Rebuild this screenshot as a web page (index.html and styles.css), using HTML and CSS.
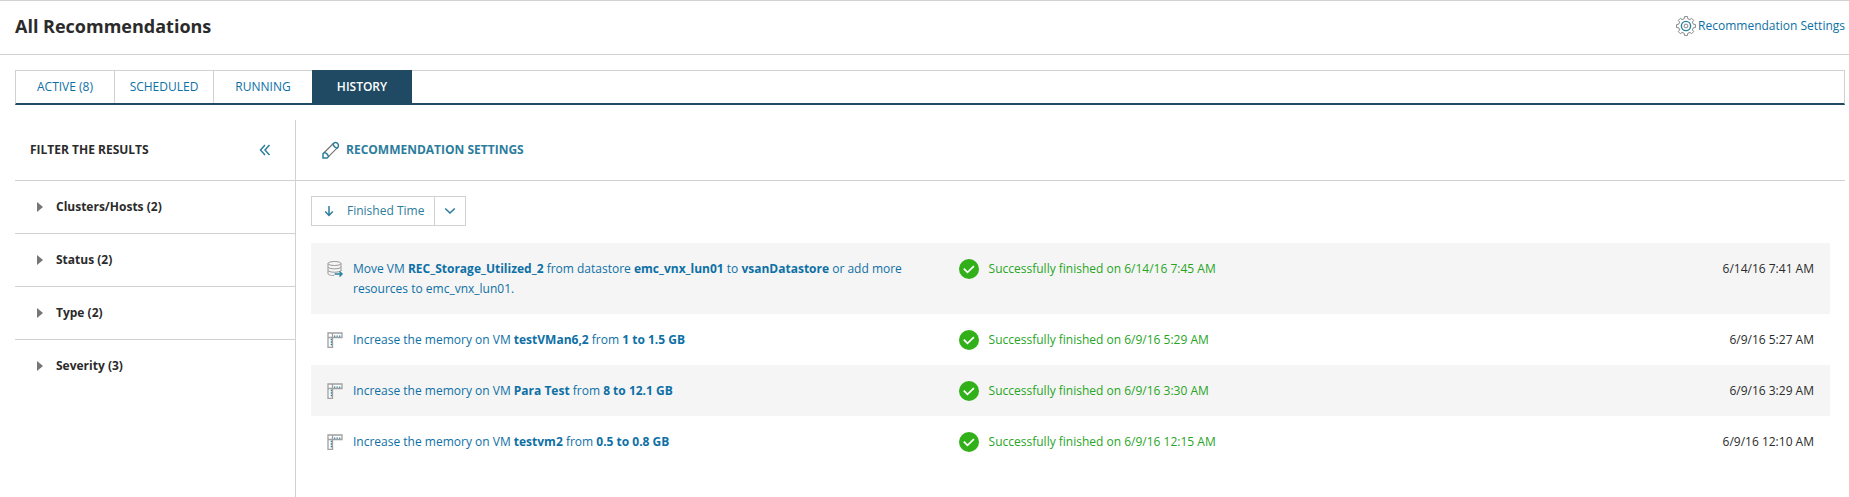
FILE: index.html
```html
<!DOCTYPE html>
<html lang="en">
<head>
<meta charset="utf-8">
<title>All Recommendations</title>
<link rel="stylesheet" href="styles.css">
</head>
<body>
<svg class="sprite" aria-hidden="true">
  <symbol id="check" viewBox="0 0 20 20">
    <circle cx="10" cy="10" r="10" fill="#32b01a"/>
    <path d="M4.800 9.600l3.700 3.800 6.400-6.200" fill="none" stroke="#fff" stroke-width="1.700"/>
  </symbol>
  <symbol id="ruler" viewBox="0 0 16 16">
    <path d="M1 1h14v4.500H5.500V15.500H1zM5.500 1v4.500H1" fill="#fff" stroke="#a0a0a0" stroke-width="1.300"/>
    <path d="M7 4.200h1.300M9.500 4.200h1.300M12 4.200h1.300M3.700 7.500H5M3.700 10H5M3.700 12.500H5" stroke="#2c7d9c" stroke-width="1.300"/>
  </symbol>
  <symbol id="datastore" viewBox="0 0 16 16">
    <g fill="none" stroke="#999" stroke-width="1">
      <ellipse cx="7.500" cy="2.500" rx="6.500" ry="2"/>
      <path d="M1 2.500v10c0 1.300 2.500 2 6 2M14 2.500v7.500M1 5.800c0 2.700 13 2.700 13 0M1 9.200c0 2.700 13 2.700 13 0"/>
    </g>
    <path d="M7.500 13h7.500M12.500 10.500l2.500 2.500-2.500 2.500" fill="none" stroke="#2980a0" stroke-width="1.500"/>
  </symbol>
  <symbol id="triangle" viewBox="0 0 6 10"><path d="M0 0l6 5-6 5z" fill="#767676"/></symbol>
</svg>
<header class="page-header">
  <h1 class="page-title">All Recommendations</h1>
  <a class="settings-link" href="#">
    <svg class="gear" viewBox="-10 -10 20 20" aria-hidden="true">
      <path d="M1.500-9.400L1.800-7.300 3.900-6.400 5.600-7.700 7.700-5.600 6.400-3.900 7.300-1.800 9.400-1.500 9.400 1.500 7.300 1.800 6.400 3.900 7.700 5.600 5.600 7.700 3.900 6.400 1.800 7.300 1.500 9.400-1.500 9.400-1.800 7.300-3.900 6.400-5.600 7.700-7.700 5.600-6.400 3.900-7.300 1.800-9.400 1.500-9.400-1.500-7.300-1.800-6.400-3.900-7.700-5.600-5.600-7.700-3.900-6.400-1.800-7.300-1.500-9.400z" fill="none" stroke="#858585" stroke-width="1" stroke-linejoin="round"/>
      <circle r="4.600" fill="none" stroke="#2980a0" stroke-width="1.400"/>
      <circle r="1.900" fill="none" stroke="#858585"/>
    </svg>Recommendation Settings</a>
</header>
<nav class="tabs">
  <a class="tab" href="#">ACTIVE (8)</a>
  <a class="tab" href="#">SCHEDULED</a>
  <a class="tab" href="#">RUNNING</a>
  <a class="tab tab-selected" href="#" aria-current="page">HISTORY</a>
</nav>
<div class="content">
  <aside class="filters">
    <div class="panel-head filters-head">
      <h2 class="filters-title">FILTER THE RESULTS</h2>
      <button class="collapse" aria-label="Collapse filters">
        <svg class="collapse-icon" viewBox="0 0 12 12" aria-hidden="true"><path d="M6 1L1.500 6 6 11M10.500 1L6 6l4.500 5" fill="none" stroke="#2c7d9c" stroke-width="1.500"/></svg>
      </button>
    </div>
    <button class="filter"><svg class="triangle"><use href="#triangle"/></svg>Clusters/Hosts (2)</button>
    <button class="filter"><svg class="triangle"><use href="#triangle"/></svg>Status (2)</button>
    <button class="filter"><svg class="triangle"><use href="#triangle"/></svg>Type (2)</button>
    <button class="filter"><svg class="triangle"><use href="#triangle"/></svg>Severity (3)</button>
  </aside>
  <main class="results">
    <div class="panel-head toolbar">
      <button class="toolbar-button">
        <svg class="pencil" viewBox="0 0 18 18" aria-hidden="true">
          <path d="M2.300 11.500l9-9M6.500 15.700L15.500 6.700" fill="none" stroke="#777" stroke-width="1.200"/>
          <path d="M11.200 2.700c2.500-3.600 7.400 1 4.200 4.200-1.800.4-4.400-2-4.200-4.200zM1 17v-4.200l1.300-1.300c1.500 0 4 2.200 4.200 4.200L5 17z" fill="none" stroke="#2c7d9c" stroke-width="1.500"/>
        </svg>RECOMMENDATION SETTINGS</button>
    </div>
    <div class="sorter">
      <button class="sort-field">
        <svg class="sort-arrow" viewBox="0 0 10 12" aria-hidden="true"><path d="M5 1v9.500M1.200 6.500L5 10.400l3.800-3.900" fill="none" stroke="#2c7d9c" stroke-width="1.500"/></svg>Finished Time</button>
      <button class="sort-menu" aria-label="Choose sort field">
        <svg class="chevron" viewBox="0 0 12 8" aria-hidden="true"><path d="M1.200 1.500L6 6l4.800-4.500" fill="none" stroke="#2c7d9c" stroke-width="1.600"/></svg>
      </button>
    </div>
    <table class="history">
      <tbody>
        <tr>
          <td class="kind"><svg class="kind-icon"><use href="#datastore"/></svg></td>
          <td class="action"><a href="#">Move VM <b>REC_Storage_Utilized_2</b> from datastore <b>emc_vnx_lun01</b> to <b>vsanDatastore</b> or add more resources to emc_vnx_lun01.</a></td>
          <td class="status"><div class="status-line"><svg class="status-icon"><use href="#check"/></svg>Successfully finished on 6/14/16 7:45 AM</div></td>
          <td class="time">6/14/16 7:41 AM</td>
        </tr>
        <tr>
          <td class="kind"><svg class="kind-icon"><use href="#ruler"/></svg></td>
          <td class="action"><a href="#">Increase the memory on VM <b>testVMan6,2</b> from <b>1 to 1.5 GB</b></a></td>
          <td class="status"><div class="status-line"><svg class="status-icon"><use href="#check"/></svg>Successfully finished on 6/9/16 5:29 AM</div></td>
          <td class="time">6/9/16 5:27 AM</td>
        </tr>
        <tr>
          <td class="kind"><svg class="kind-icon"><use href="#ruler"/></svg></td>
          <td class="action"><a href="#">Increase the memory on VM <b>Para Test</b> from <b>8 to 12.1 GB</b></a></td>
          <td class="status"><div class="status-line"><svg class="status-icon"><use href="#check"/></svg>Successfully finished on 6/9/16 3:30 AM</div></td>
          <td class="time">6/9/16 3:29 AM</td>
        </tr>
        <tr>
          <td class="kind"><svg class="kind-icon"><use href="#ruler"/></svg></td>
          <td class="action"><a href="#">Increase the memory on VM <b>testvm2</b> from <b>0.5 to 0.8 GB</b></a></td>
          <td class="status"><div class="status-line"><svg class="status-icon"><use href="#check"/></svg>Successfully finished on 6/9/16 12:15 AM</div></td>
          <td class="time">6/9/16 12:10 AM</td>
        </tr>
      </tbody>
    </table>
  </main>
</div>
</body>
</html>
```
FILE: styles.css
```css
* { box-sizing: border-box; }

body {
  margin: 0;
  min-height: 100vh;
  display: flex;
  flex-direction: column;
  background: #fff;
  color: #2b2b2b;
  font: 12px/20px "Open Sans", sans-serif;
}

a { color: #0d70a5; text-decoration: none; }
b { font-weight: 700; }
svg { display: block; flex: none; }
.sprite { position: absolute; width: 0; height: 0; }

button {
  margin: 0;
  padding: 0;
  border: 0;
  background: none;
  color: inherit;
  font: inherit;
  text-align: left;
  cursor: pointer;
}

.page-header {
  display: flex;
  align-items: center;
  justify-content: space-between;
  height: 55px;
  padding: 0 4px 4px 15px;
  border-top: 1px solid #d2d2d2;
  border-bottom: 1px solid #d2d2d2;
}
.page-title { margin: 0; font-size: 18px; line-height: 24px; font-weight: 700; }
.settings-link { display: flex; align-items: center; gap: 2px; }
.gear { width: 20px; height: 20px; }

.tabs {
  display: flex;
  height: 35px;
  margin: 15px 4px 15px 15px;
  border: 1px solid #d2d2d2;
  border-bottom: 2px solid #204a63;
}
.tab {
  width: 99px;
  padding: 6px 0;
  border-right: 1px solid #d2d2d2;
  text-align: center;
}
.tab-selected {
  width: 100px;
  margin: -1px 0 0 -1px;
  padding-top: 7px;
  border: 0;
  background: #204a63;
  color: #fff;
  font-weight: 600;
}

.content { display: flex; flex: 1; margin: 0 4px 0 15px; }
.filters { width: 281px; flex: none; border-right: 1px solid #d2d2d2; }
.panel-head {
  display: flex;
  align-items: center;
  height: 61px;
  border-bottom: 1px solid #d2d2d2;
}
.filters-head { justify-content: space-between; padding: 0 24px 0 15px; }
.filters-title { margin: 0; font-size: 12px; font-weight: 700; }
.collapse-icon { width: 12px; height: 12px; }
.filter {
  display: flex;
  align-items: center;
  gap: 13px;
  width: 100%;
  height: 53px;
  padding: 0 22px;
  border-bottom: 1px solid #d2d2d2;
  font-weight: 700;
}
.filter:last-child { border-bottom-color: transparent; }
.triangle { width: 6px; height: 10px; }

.results { flex: 1; min-width: 0; }
.toolbar { padding: 0 26px; }
.toolbar-button { display: flex; align-items: center; gap: 6px; color: #2c7d9c; font-weight: 700; }
.pencil { width: 18px; height: 18px; }

.sorter {
  display: inline-flex;
  height: 30px;
  margin: 15px 15px 17px;
  border: 1px solid #d2d2d2;
  vertical-align: top;
  color: #2c7d9c;
}
.sort-field { display: flex; align-items: center; gap: 13px; padding: 0 10px 0 12px; }
.sort-arrow { width: 10px; height: 12px; }
.sort-menu { display: grid; place-items: center; width: 31px; border-left: 1px solid #d2d2d2; }
.chevron { width: 12px; height: 8px; }

.history {
  width: calc(100% - 30px);
  margin: 0 15px;
  border-collapse: collapse;
  table-layout: fixed;
}
.history tr:nth-child(odd) { background: #f5f5f5; }
.history td { padding: 16px 0 15px; vertical-align: top; }
.history .kind { width: 40px; padding-left: 16px; }
.kind-icon { width: 16px; height: 16px; margin-top: 2px; }
.history .action { width: 40%; padding: 16px 50px 15px 2px; }
.status { color: #27a51f; }
.status-line { display: flex; align-items: center; gap: 10px; }
.status-icon { width: 20px; height: 20px; }
.history .time { width: 160px; padding-right: 16px; text-align: right; }
```
